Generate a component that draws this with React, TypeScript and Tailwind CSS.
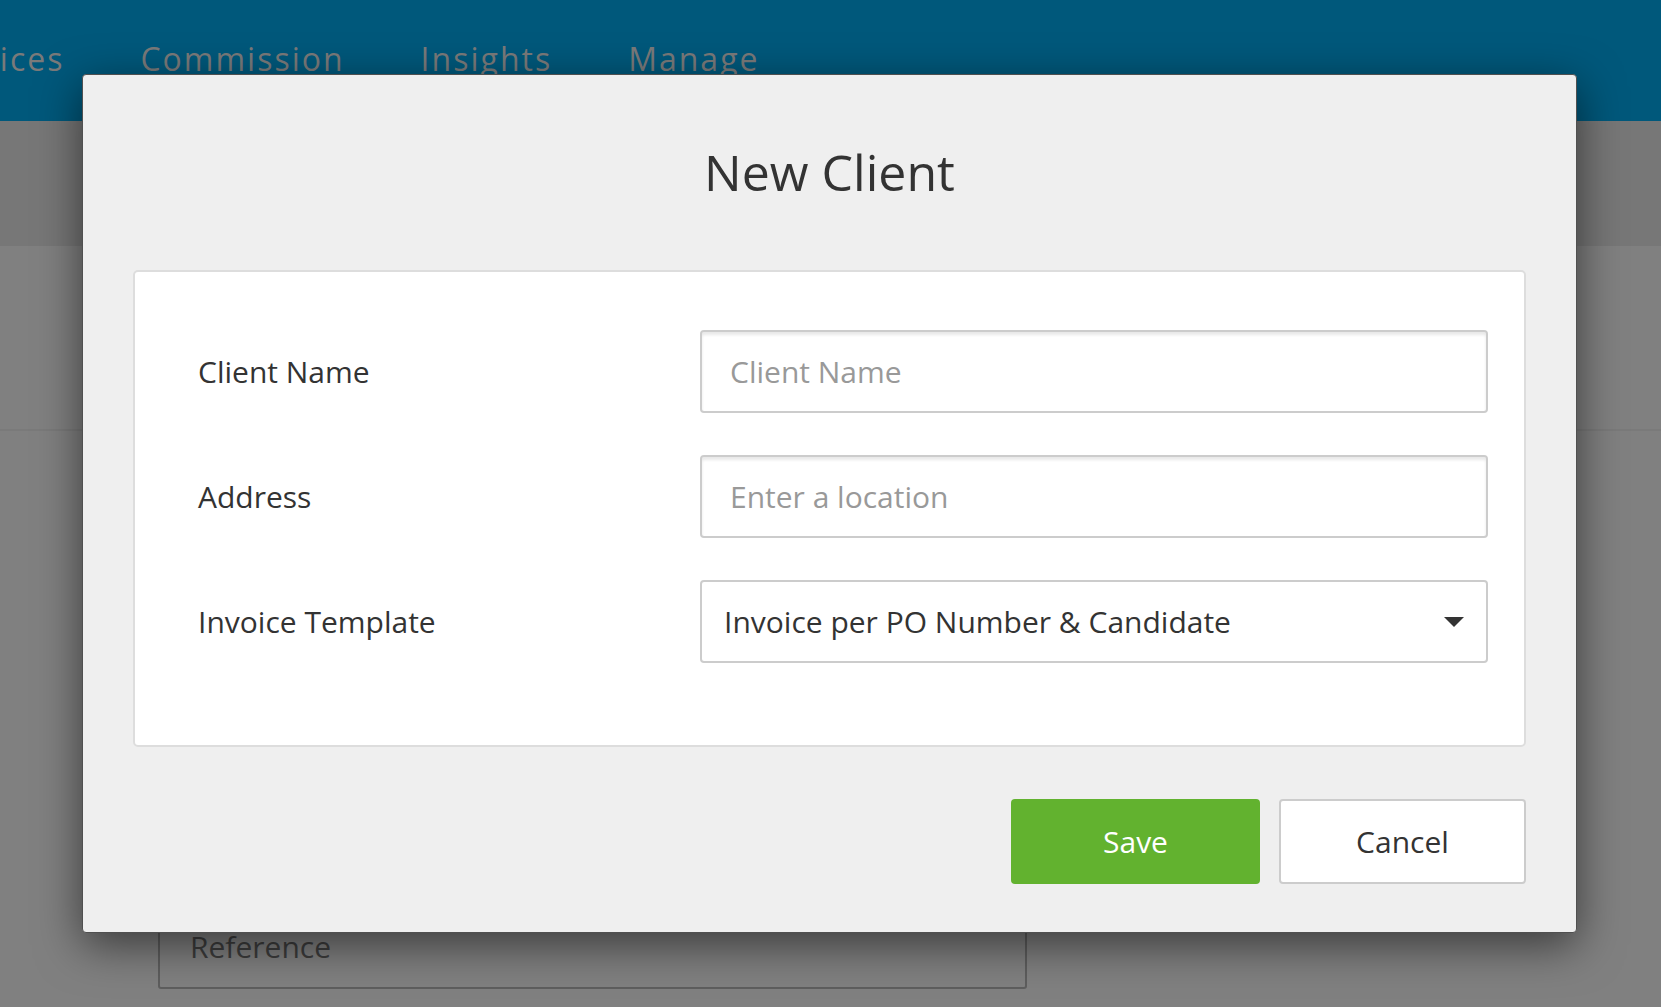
import React from "react";

const font = { fontFamily: '"Open Sans", "Noto Sans", sans-serif' };

const navItems = ["Invoices", "Commission", "Insights", "Manage"];

const fields = [
  { label: "Client Name", placeholder: "Client Name" },
  { label: "Address", placeholder: "Enter a location" },
];

const App = () => {
  return (
    <div
      className="relative h-[1007px] w-[1661px] overflow-hidden bg-[#808080]"
      style={font}
    >
      {/* Page behind the overlay */}
      <header className="flex h-[121px] items-start bg-[#00587b] pt-[37px]">
        <nav className="-ml-[72px] flex gap-[76px] text-[32px] leading-[44px] tracking-[2px] text-[#7a7a7a]">
          {navItems.map((item) => (
            <span key={item}>{item}</span>
          ))}
        </nav>
      </header>
      <div className="h-[125px] bg-[#777777]" />
      <div className="h-[185px] border-b-2 border-[#7a7a7a]" />
      <div className="pl-[158px] pt-[470px]">
        <div className="flex h-[88px] w-[869px] items-center rounded-[3px] border-2 border-[#5e5e5e] pl-[30px] pt-[2px] text-[30px] text-[#3d3d3d]">
          Reference
        </div>
      </div>

      {/* Modal */}
      <div className="absolute left-[82px] top-[74px] flex h-[859px] w-[1495px] flex-col rounded-[4px] border border-[#505050] bg-[#efefef] px-[50px] pt-[63px] shadow-[0_12px_45px_rgba(0,0,0,0.55)]">
        <h1 className="text-center text-[50px] leading-[68px] text-[#333333]">
          New Client
        </h1>

        <div className="mt-[64px] rounded-[5px] border-2 border-[#dddddd] bg-white pb-[82px] pl-[63px] pr-[36px] pt-[58px]">
          <div className="flex flex-col gap-[42px]">
            {fields.map((f) => (
              <div key={f.label} className="flex items-center">
                <label className="w-[502px] text-[30px] text-[#333333]">
                  {f.label}
                </label>
                <input
                  placeholder={f.placeholder}
                  className="h-[83px] flex-1 rounded-[4px] border-2 border-[#cccccc] bg-white px-[28px] text-[30px] text-[#333333] shadow-[inset_0_3px_3px_rgba(0,0,0,0.09)] outline-none placeholder:text-[#999999]"
                  style={font}
                />
              </div>
            ))}
            <div className="flex items-center">
              <label className="w-[502px] text-[30px] text-[#333333]">
                Invoice Template
              </label>
              <div className="flex h-[83px] flex-1 items-center justify-between rounded-[4px] border-2 border-[#cccccc] bg-white pl-[22px] pr-[22px] text-[30px] text-[#333333]">
                <span>Invoice per PO Number &amp; Candidate</span>
                <svg width="20" height="10" viewBox="0 0 20 10">
                  <path d="M0 0 L20 0 L10 10 Z" fill="#333333" />
                </svg>
              </div>
            </div>
          </div>
        </div>

        <div className="mt-[52px] flex justify-end gap-[19px]">
          <button className="h-[85px] w-[249px] rounded-[4px] bg-[#62b22f] text-[30px] text-white">
            Save
          </button>
          <button className="h-[85px] w-[247px] rounded-[4px] border-2 border-[#cccccc] bg-white text-[30px] text-[#333333]">
            Cancel
          </button>
        </div>
      </div>
    </div>
  );
};

export default App;
